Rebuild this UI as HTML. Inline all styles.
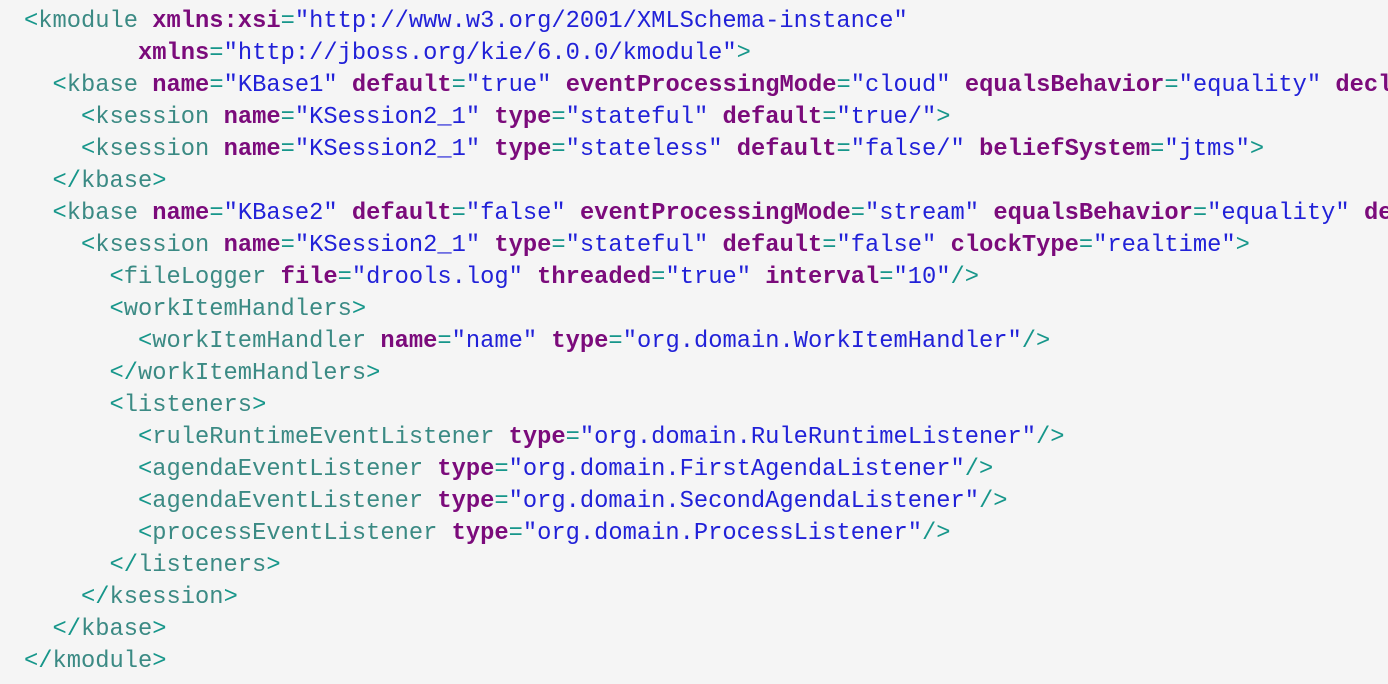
<!DOCTYPE html><html><head><style>
html,body{margin:0;background:#f5f5f5;width:1388px;height:684px;overflow:hidden}
pre{margin:0;padding:6px 0 0 24px;width:1364px;height:678px;overflow:hidden;font-family:"Liberation Mono",monospace;font-size:23.75px;line-height:32px;color:#3b8a84;white-space:pre}
.t{color:#3b8a84}.p{color:#16968a}.a{color:#7b0b7b;font-weight:bold}.s{color:#2121d8}
</style></head><body><pre><span class="p">&lt;</span>kmodule <span class="a">xmlns:xsi</span><span class="p">=</span><span class="s">"http://www.w3.org/2001/XMLSchema-instance"</span>
        <span class="a">xmlns</span><span class="p">=</span><span class="s">"http://jboss.org/kie/6.0.0/kmodule"</span><span class="p">&gt;</span>
  <span class="p">&lt;</span>kbase <span class="a">name</span><span class="p">=</span><span class="s">"KBase1"</span> <span class="a">default</span><span class="p">=</span><span class="s">"true"</span> <span class="a">eventProcessingMode</span><span class="p">=</span><span class="s">"cloud"</span> <span class="a">equalsBehavior</span><span class="p">=</span><span class="s">"equality"</span> <span class="a">declarativeAgenda</span>
    <span class="p">&lt;</span>ksession <span class="a">name</span><span class="p">=</span><span class="s">"KSession2_1"</span> <span class="a">type</span><span class="p">=</span><span class="s">"stateful"</span> <span class="a">default</span><span class="p">=</span><span class="s">"true/"</span><span class="p">&gt;</span>
    <span class="p">&lt;</span>ksession <span class="a">name</span><span class="p">=</span><span class="s">"KSession2_1"</span> <span class="a">type</span><span class="p">=</span><span class="s">"stateless"</span> <span class="a">default</span><span class="p">=</span><span class="s">"false/"</span> <span class="a">beliefSystem</span><span class="p">=</span><span class="s">"jtms"</span><span class="p">&gt;</span>
  <span class="p">&lt;/</span>kbase<span class="p">&gt;</span>
  <span class="p">&lt;</span>kbase <span class="a">name</span><span class="p">=</span><span class="s">"KBase2"</span> <span class="a">default</span><span class="p">=</span><span class="s">"false"</span> <span class="a">eventProcessingMode</span><span class="p">=</span><span class="s">"stream"</span> <span class="a">equalsBehavior</span><span class="p">=</span><span class="s">"equality"</span> <span class="a">declarativeAgenda</span>
    <span class="p">&lt;</span>ksession <span class="a">name</span><span class="p">=</span><span class="s">"KSession2_1"</span> <span class="a">type</span><span class="p">=</span><span class="s">"stateful"</span> <span class="a">default</span><span class="p">=</span><span class="s">"false"</span> <span class="a">clockType</span><span class="p">=</span><span class="s">"realtime"</span><span class="p">&gt;</span>
      <span class="p">&lt;</span>fileLogger <span class="a">file</span><span class="p">=</span><span class="s">"drools.log"</span> <span class="a">threaded</span><span class="p">=</span><span class="s">"true"</span> <span class="a">interval</span><span class="p">=</span><span class="s">"10"</span><span class="p">/&gt;</span>
      <span class="p">&lt;</span>workItemHandlers<span class="p">&gt;</span>
        <span class="p">&lt;</span>workItemHandler <span class="a">name</span><span class="p">=</span><span class="s">"name"</span> <span class="a">type</span><span class="p">=</span><span class="s">"org.domain.WorkItemHandler"</span><span class="p">/&gt;</span>
      <span class="p">&lt;/</span>workItemHandlers<span class="p">&gt;</span>
      <span class="p">&lt;</span>listeners<span class="p">&gt;</span>
        <span class="p">&lt;</span>ruleRuntimeEventListener <span class="a">type</span><span class="p">=</span><span class="s">"org.domain.RuleRuntimeListener"</span><span class="p">/&gt;</span>
        <span class="p">&lt;</span>agendaEventListener <span class="a">type</span><span class="p">=</span><span class="s">"org.domain.FirstAgendaListener"</span><span class="p">/&gt;</span>
        <span class="p">&lt;</span>agendaEventListener <span class="a">type</span><span class="p">=</span><span class="s">"org.domain.SecondAgendaListener"</span><span class="p">/&gt;</span>
        <span class="p">&lt;</span>processEventListener <span class="a">type</span><span class="p">=</span><span class="s">"org.domain.ProcessListener"</span><span class="p">/&gt;</span>
      <span class="p">&lt;/</span>listeners<span class="p">&gt;</span>
    <span class="p">&lt;/</span>ksession<span class="p">&gt;</span>
  <span class="p">&lt;/</span>kbase<span class="p">&gt;</span>
<span class="p">&lt;/</span>kmodule<span class="p">&gt;</span></pre></body></html>
